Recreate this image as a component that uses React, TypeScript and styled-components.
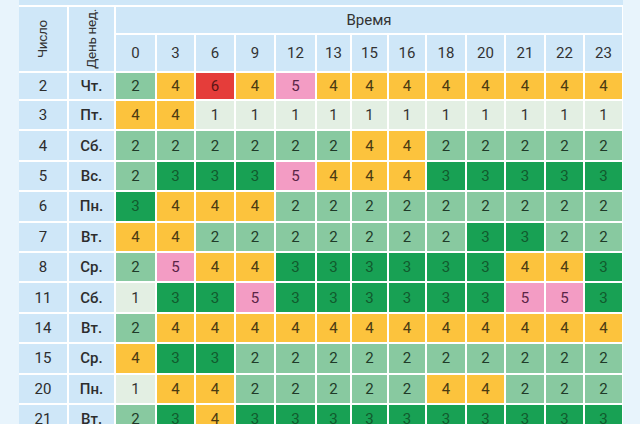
import React from 'react';
import styled, { createGlobalStyle } from 'styled-components';

const GlobalStyle = createGlobalStyle`
  html, body {
    margin: 0;
    padding: 0;
    background: #e8f4fc;
  }
  body {
    font-family: Roboto, "Liberation Sans", sans-serif;
  }
`;

const Page = styled.div`
  width: 640px;
  height: 424px;
  overflow: hidden;
  padding-left: 19px;
  box-sizing: border-box;
`;

const Sheet = styled.div`
  width: 604px;
  background: #fff;
  display: flex;
  flex-direction: column;
  gap: 2px;
`;

const TopBand = styled.div`
  height: 5px;
  background: #cfe7f8;
`;

const HEAD_COLS = '48px 45px';
const TIME_COLS = [39, 37, 38, 38, 39, 33, 35, 36, 38, 37, 38, 37, 37];

const Grid = styled.div`
  display: grid;
  grid-template-columns: ${HEAD_COLS} ${TIME_COLS.map((w) => `${w}px`).join(' ')};
  grid-template-rows: 26px 36px 26px;
  grid-auto-rows: 28.4px;
  gap: 2px;
`;

const HeadCell = styled.div<{ $span?: number; $rows?: number }>`
  background: #cfe7f8;
  color: #333;
  font-size: 15px;
  display: flex;
  align-items: center;
  justify-content: center;
  overflow: hidden;
  ${(p) => (p.$span ? `grid-column: span ${p.$span};` : '')}
  ${(p) => (p.$rows ? `grid-row: span ${p.$rows};` : '')}
`;

const Vertical = styled.span`
  writing-mode: vertical-rl;
  transform: rotate(180deg);
  white-space: nowrap;
  font-size: 13.5px;
  letter-spacing: -0.3px;
  line-height: 1;
`;

const LabelCell = styled.div<{ $bold?: boolean }>`
  background: #cfe7f8;
  color: #2d2d2d;
  font-size: 15px;
  font-weight: ${(p) => (p.$bold ? 500 : 400)};
  display: flex;
  align-items: center;
  justify-content: center;
`;

const LEVELS: Record<number, { bg: string; fg: string }> = {
  1: { bg: '#e3efe3', fg: '#333' },
  2: { bg: '#88c9a0', fg: '#1f3a28' },
  3: { bg: '#18a154', fg: '#115a2d' },
  4: { bg: '#fcc33d', fg: '#4a3a12' },
  5: { bg: '#f39cc4', fg: '#5a2446' },
  6: { bg: '#e53d3a', fg: '#5a1515' },
};

const ValueCell = styled.div<{ $level: number }>`
  background: ${(p) => LEVELS[p.$level].bg};
  color: ${(p) => LEVELS[p.$level].fg};
  font-size: 15px;
  display: flex;
  align-items: center;
  justify-content: center;
`;

const hours = [0, 3, 6, 9, 12, 13, 15, 16, 18, 20, 21, 22, 23];

const rows: [number, string, string][] = [
  [2, 'Чт.', '2 4 6 4 5 4 4 4 4 4 4 4 4'],
  [3, 'Пт.', '4 4 1 1 1 1 1 1 1 1 1 1 1'],
  [4, 'Сб.', '2 2 2 2 2 2 4 4 2 2 2 2 2'],
  [5, 'Вс.', '2 3 3 3 5 4 4 4 3 3 3 3 3'],
  [6, 'Пн.', '3 4 4 4 2 2 2 2 2 2 2 2 2'],
  [7, 'Вт.', '4 4 2 2 2 2 2 2 2 3 3 2 2'],
  [8, 'Ср.', '2 5 4 4 3 3 3 3 3 3 4 4 3'],
  [11, 'Сб.', '1 3 3 5 3 3 3 3 3 3 5 5 3'],
  [14, 'Вт.', '2 4 4 4 4 4 4 4 4 4 4 4 4'],
  [15, 'Ср.', '4 3 3 2 2 2 2 2 2 2 2 2 2'],
  [20, 'Пн.', '1 4 4 2 2 2 2 2 4 4 2 2 2'],
  [21, 'Вт.', '2 3 4 3 3 3 3 3 3 3 3 3 3'],
];

export default function App() {
  return (
    <Page>
      <GlobalStyle />
      <Sheet>
        <TopBand />
        <Grid>
          <HeadCell $rows={2}>
            <Vertical>Число</Vertical>
          </HeadCell>
          <HeadCell $rows={2}>
            <Vertical>День нед.</Vertical>
          </HeadCell>
          <HeadCell $span={hours.length}>Время</HeadCell>
          {hours.map((h) => (
            <HeadCell key={h}>{h}</HeadCell>
          ))}
          {rows.map(([day, weekday, values]) => (
            <React.Fragment key={day}>
              <LabelCell>{day}</LabelCell>
              <LabelCell $bold>{weekday}</LabelCell>
              {values.split(' ').map((v, i) => (
                <ValueCell key={i} $level={Number(v)}>
                  {v}
                </ValueCell>
              ))}
            </React.Fragment>
          ))}
        </Grid>
      </Sheet>
    </Page>
  );
}
